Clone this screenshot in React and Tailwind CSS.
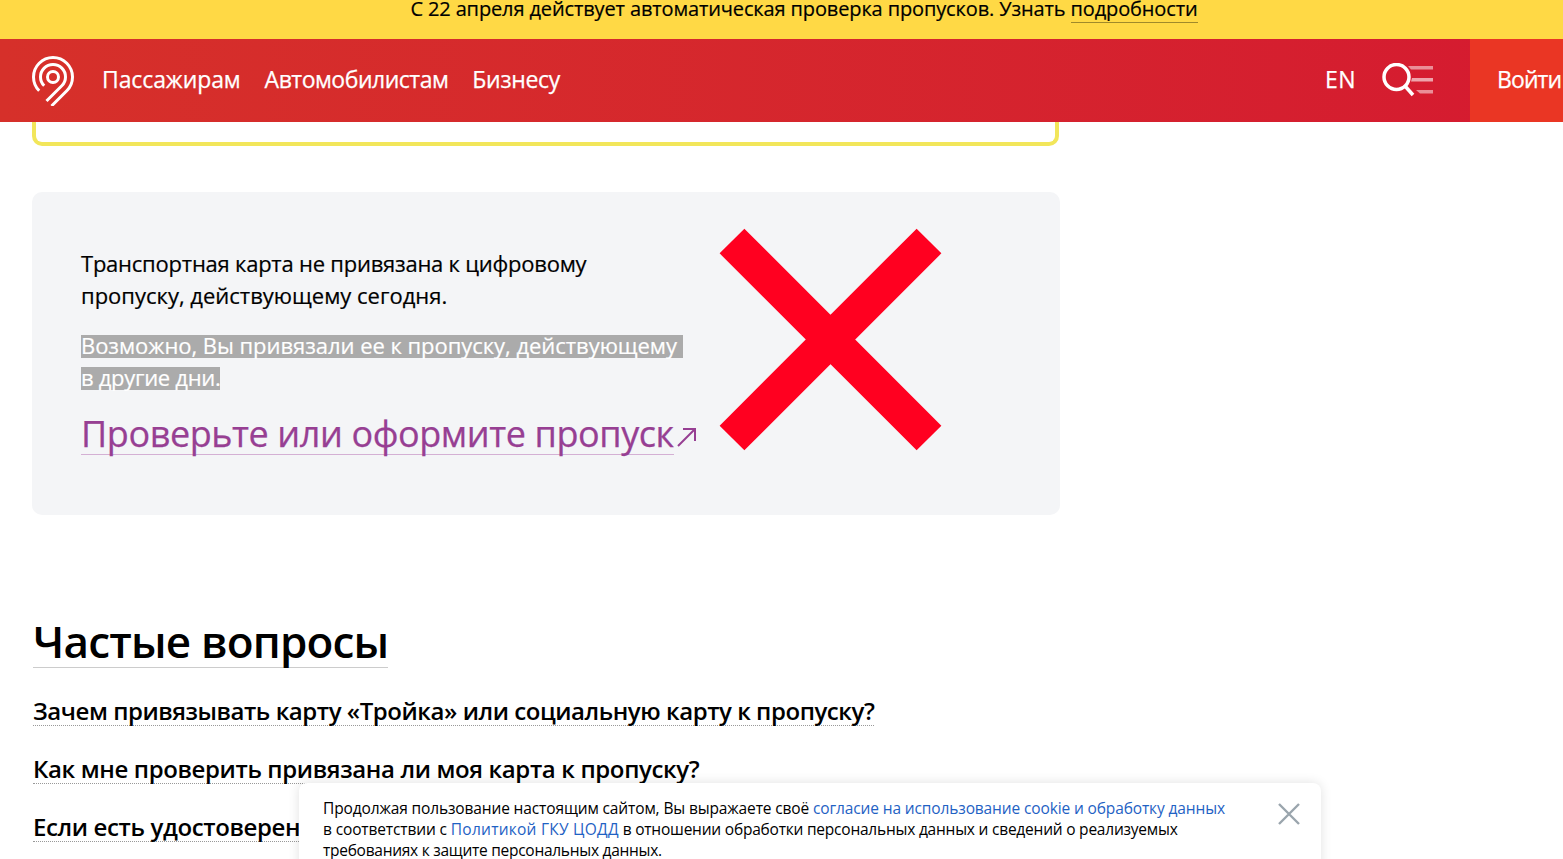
import React from "react";

function Logo() {
  return (
    <svg width="42" height="50" viewBox="0 0 42 50" fill="none" stroke="#fff" strokeWidth="3" className="shrink-0 mt-[3px]">
      <path d="M7.2 34.8 A19.5 19.5 0 1 1 34.8 34.8 L19.5 50" />
      <path d="M12.2 29.8 A12.5 12.5 0 1 1 29.8 29.8 L14.5 45" />
      <circle cx="21" cy="21" r="5.5" />
    </svg>
  );
}

function Search() {
  return (
    <svg width="52" height="34" viewBox="0 0 52 34" fill="none" className="shrink-0">
      <circle cx="14.5" cy="14" r="12.5" stroke="#fff" strokeWidth="3.5" />
      <path d="M23 23 L31 32" stroke="#fff" strokeWidth="3.5" />
      <path d="M26 3 H51 V6.5 H29 Z" fill="#fff" fillOpacity="0.5" />
      <path d="M30 15 H51 V18.5 H29 Z" fill="#fff" fillOpacity="0.6" />
      <path d="M34 27 H51 V30.5 H38 Z" fill="#fff" fillOpacity="0.5" />
    </svg>
  );
}

export default function App() {
  return (
    <div className="h-[859px] overflow-hidden bg-white relative text-black font-['Open_Sans','Noto_Sans',sans-serif]">
      <div className="h-[39px] bg-[#ffd945] flex justify-center overflow-hidden pl-[45px]">
        <p className="text-[20px] leading-[20px] -mt-[1px] tracking-[-0.13px] [-webkit-text-stroke:0.2px_currentColor] whitespace-nowrap">
          С 22 апреля действует автоматическая проверка пропусков. Узнать{" "}
          <span className="border-b border-[#a08a2a]">подробности</span>
        </p>
      </div>
      <header className="h-[83px] flex items-stretch bg-gradient-to-r from-[#d6302a] to-[#d51a30] text-white text-[23px] [-webkit-text-stroke:0.25px_currentColor]">
        <div className="pl-[32px] pb-[2px] flex items-center gap-[28px] flex-1">
          <Logo />
          <nav className="flex gap-[24px]">
            <span className="tracking-[-0.1px]">Пассажирам</span>
            <span className="tracking-[-0.5px]">Автомобилистам</span>
            <span className="tracking-[-0.3px]">Бизнесу</span>
          </nav>
        </div>
        <div className="flex items-center gap-[26px] pr-[36px] pb-[2px]">
          <span className="tracking-[0.5px]">EN</span>
          <Search />
        </div>
        <div className="w-[93px] bg-[#ea3624] flex items-center pl-[27px] pb-[2px] tracking-[-0.9px] overflow-hidden whitespace-nowrap">Войти</div>
      </header>
      <main className="pl-[32px] w-[1060px] box-content">
        <div className="w-[1027px] h-[24px] border-[4px] border-t-0 border-[#f2e65a] rounded-b-[10px]" />
        <section className="mt-[46px] w-[1028px] h-[323px] bg-[#f4f5f7] rounded-[10px] flex pl-[49px] pt-[55px]">
          <div className="w-[620px] shrink-0">
            <p className="text-[22px] leading-[32px] [-webkit-text-stroke:0.2px_currentColor]">
              <span className="tracking-[-0.23px]">Транспортная карта не привязана к цифровому</span><br />
              <span>пропуску, действующему сегодня.</span>
            </p>
            <div className="mt-[24px] text-[22px] leading-[21px] text-white [-webkit-text-stroke:0.2px_currentColor]">
              <div className="bg-[#ababab] w-[602px] h-[23px] whitespace-nowrap tracking-[-0.04px]">Возможно, Вы привязали ее к пропуску, действующему</div>
              <div className="bg-[#ababab] w-fit h-[23px] mt-[9px] tracking-[-0.3px]">в другие дни.</div>
            </div>
            <div className="mt-[24px] flex items-start text-[36px] leading-[40px] text-[#973f93] whitespace-nowrap">
              <span className="block border-b border-[#d4b0d4] tracking-[-0.42px] [-webkit-text-stroke:0.25px_currentColor]">Проверьте или оформите пропуск</span>
              <svg width="20" height="20" viewBox="0 0 20 20" fill="none" stroke="#973f93" strokeWidth="2" className="ml-[3px] mt-[13px] shrink-0">
                <path d="M1 19 L18 2 M6 2 H18 V14" />
              </svg>
            </div>
          </div>
          <svg width="223" height="223" viewBox="0 0 223 223" className="mt-[-19px] ml-[18px]">
            <path d="M13 13 L210 210 M210 13 L13 210" stroke="#ff0020" strokeWidth="35" />
          </svg>
        </section>
        <h2 className="mt-[100px] ml-[1px] block w-fit border-b border-[#cccccc] text-[44px] leading-[52px] font-semibold tracking-[-0.8px]">
          Частые вопросы
        </h2>
        <div className="mt-[29px] ml-[1px] flex flex-col gap-[29px] text-[24px] leading-[27px] font-semibold">
          <div className="w-fit h-[29px] border-b border-dotted border-[#999] tracking-[-0.45px]">Зачем привязывать карту «Тройка» или социальную карту к пропуску?</div>
          <div className="w-fit h-[29px] border-b border-dotted border-[#999] tracking-[-0.37px]">Как мне проверить привязана ли моя карта к пропуску?</div>
          <div className="w-fit h-[29px] border-b border-dotted border-[#999] tracking-[-0.37px] whitespace-nowrap">Если есть удостоверение, нужно ли привязывать карту?</div>
        </div>
      </main>
      <aside className="absolute left-[299px] top-[783px] w-[1022px] h-[90px] bg-white rounded-[8px] shadow-[0_0_12px_rgba(0,0,0,0.12)] pl-[24px] pt-[15px] text-[15.5px] leading-[21px] tracking-[-0.13px]">
        <p className="whitespace-nowrap">
          Продолжая пользование настоящим сайтом, Вы выражаете своё <span className="text-[#1f62c4]">согласие на использование cookie и обработку данных</span><br />
          в соответствии с <span className="text-[#1f62c4] tracking-[0.25px]">Политикой ГКУ ЦОДД</span> <span className="tracking-[-0.22px]">в отношении обработки персональных данных и сведений о реализуемых</span><br />
          <span className="tracking-[-0.27px]">требованиях к защите персональных данных.</span>
        </p>
        <svg width="24" height="24" viewBox="0 0 24 24" className="absolute left-[978px] top-[19px]" stroke="#9aa5ad" strokeWidth="2.4">
          <path d="M2 2 L22 22 M22 2 L2 22" />
        </svg>
      </aside>
    </div>
  );
}
